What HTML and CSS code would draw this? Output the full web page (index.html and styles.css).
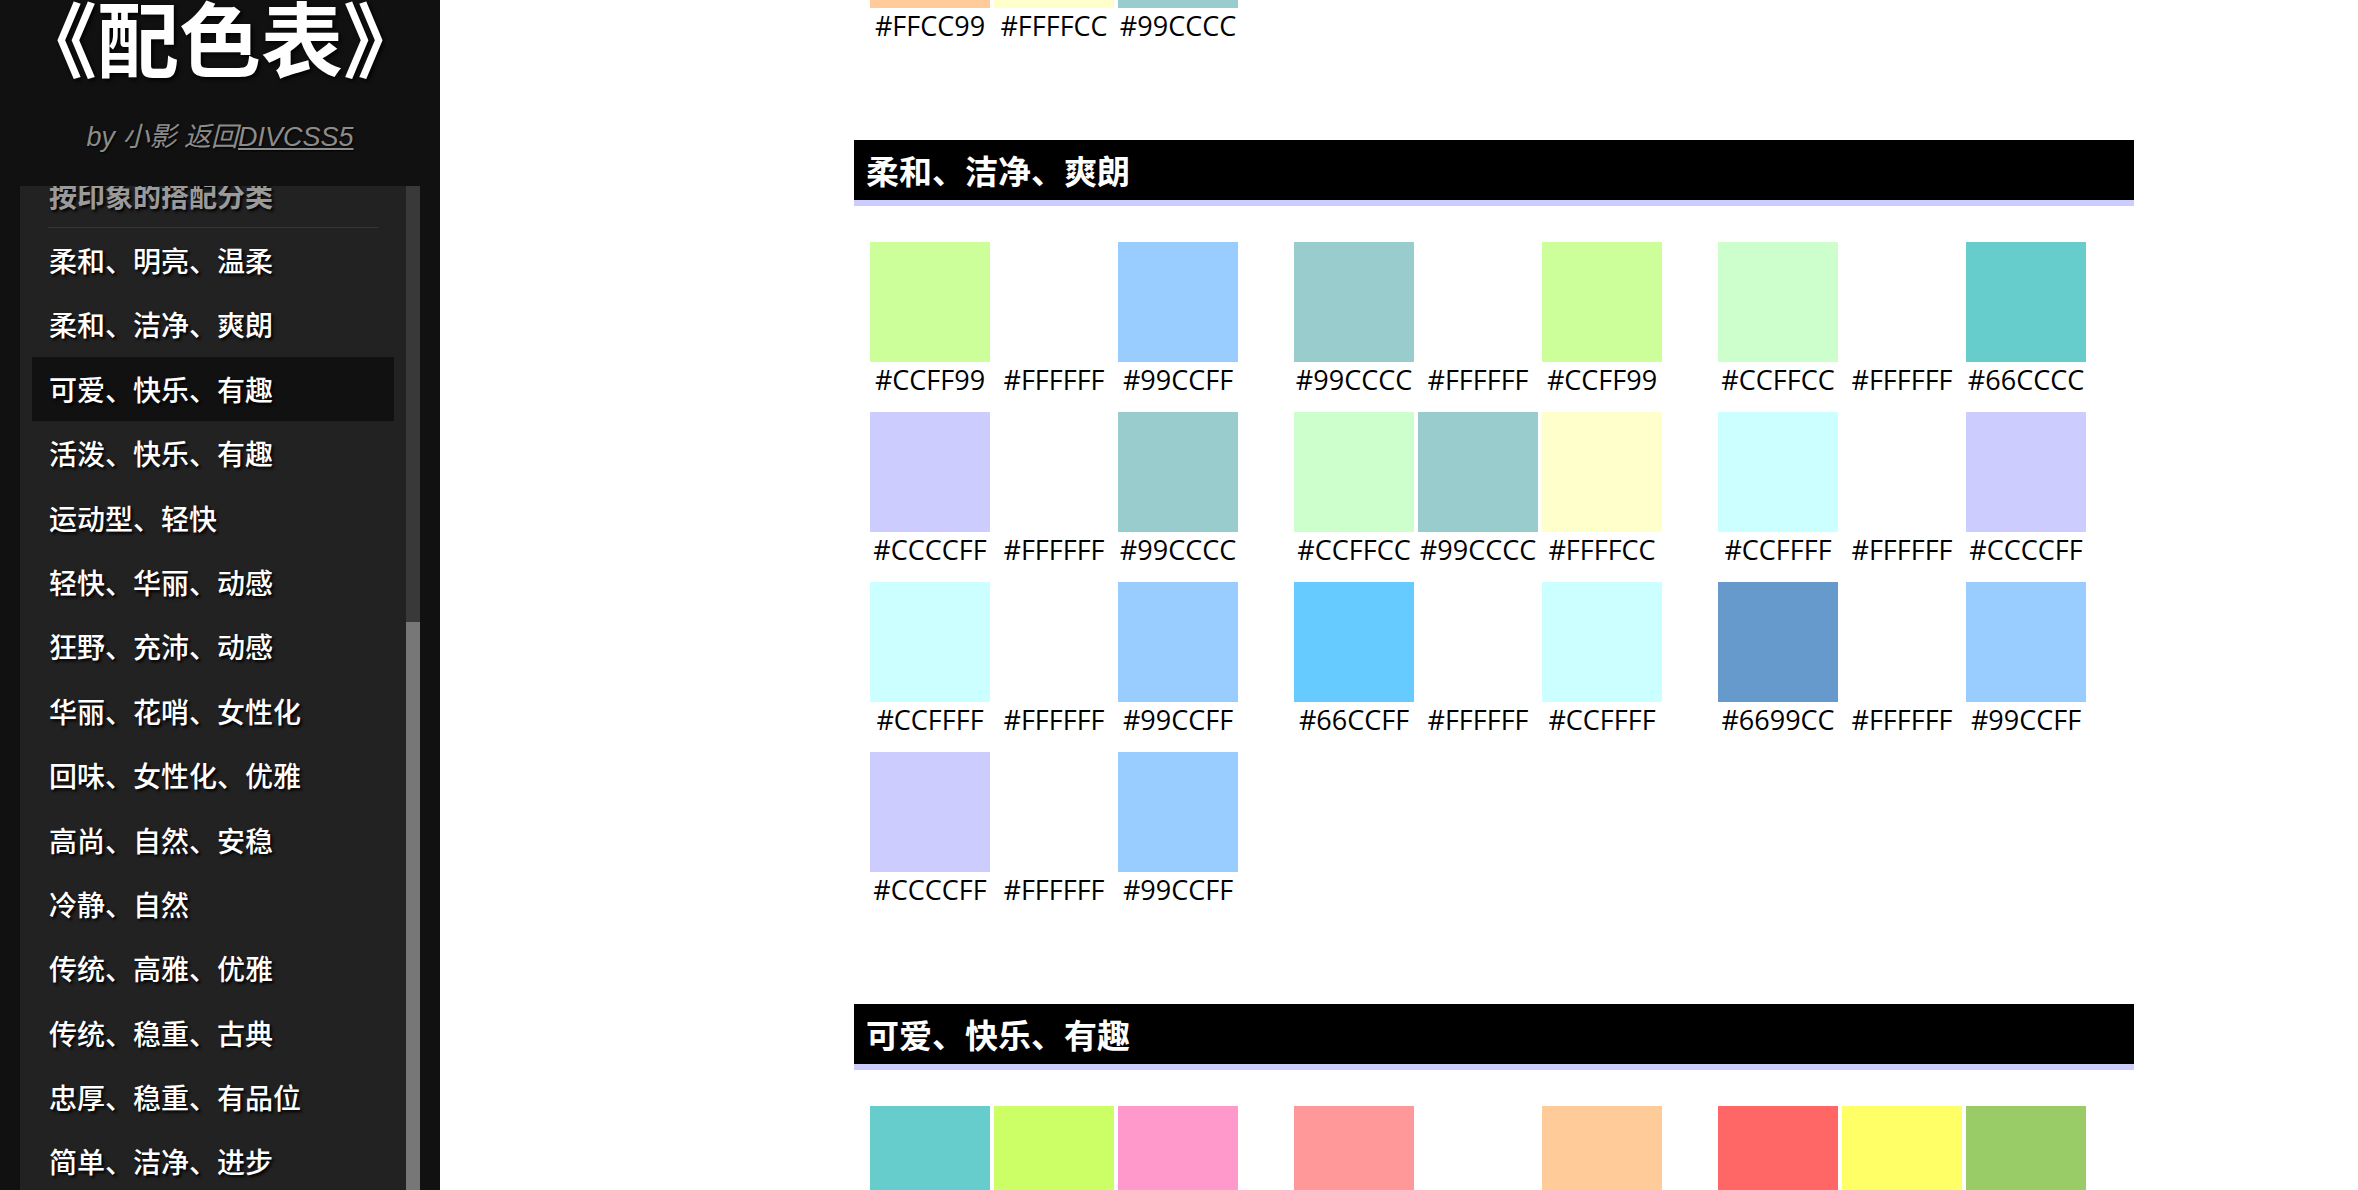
FILE: index.html
```html
<!DOCTYPE html>
<html lang="zh-CN">
<head>
<meta charset="utf-8">
<title>《配色表》</title>
<link rel="stylesheet" href="styles.css">
</head>
<body>
<aside class="sidebar">
  <h1 class="logo">《配色表》</h1>
  <p class="byline">by 小影 返回<a class="byline-link" href="#">DIVCSS5</a></p>
  <div class="panel">
    <nav class="nav">
      <div class="nav-head">按印象的搭配分类</div>
      <ul class="nav-list">
        <li class="nav-item">柔和、明亮、温柔</li>
        <li class="nav-item">柔和、洁净、爽朗</li>
        <li class="nav-item active">可爱、快乐、有趣</li>
        <li class="nav-item">活泼、快乐、有趣</li>
        <li class="nav-item">运动型、轻快</li>
        <li class="nav-item">轻快、华丽、动感</li>
        <li class="nav-item">狂野、充沛、动感</li>
        <li class="nav-item">华丽、花哨、女性化</li>
        <li class="nav-item">回味、女性化、优雅</li>
        <li class="nav-item">高尚、自然、安稳</li>
        <li class="nav-item">冷静、自然</li>
        <li class="nav-item">传统、高雅、优雅</li>
        <li class="nav-item">传统、稳重、古典</li>
        <li class="nav-item">忠厚、稳重、有品位</li>
        <li class="nav-item">简单、洁净、进步</li>
      </ul>
    </nav>
    <div class="scrollbar"><div class="thumb"></div></div>
  </div>
</aside>

<main class="main">
  <div class="content">
    <section class="scheme">
      <div class="rows">
        <div class="group">
          <div class="cell"><div class="sw c-ffcc99"></div><div class="lbl">#FFCC99</div></div>
          <div class="cell"><div class="sw c-ffffcc"></div><div class="lbl">#FFFFCC</div></div>
          <div class="cell"><div class="sw c-99cccc"></div><div class="lbl">#99CCCC</div></div>
        </div>
      </div>
    </section>

    <section class="scheme">
      <h2 class="scheme-title">柔和、洁净、爽朗</h2>
      <div class="rows first">
        <div class="group">
          <div class="cell"><div class="sw c-ccff99"></div><div class="lbl">#CCFF99</div></div>
          <div class="cell"><div class="sw c-ffffff"></div><div class="lbl">#FFFFFF</div></div>
          <div class="cell"><div class="sw c-99ccff"></div><div class="lbl">#99CCFF</div></div>
        </div>
        <div class="group">
          <div class="cell"><div class="sw c-99cccc"></div><div class="lbl">#99CCCC</div></div>
          <div class="cell"><div class="sw c-ffffff"></div><div class="lbl">#FFFFFF</div></div>
          <div class="cell"><div class="sw c-ccff99"></div><div class="lbl">#CCFF99</div></div>
        </div>
        <div class="group">
          <div class="cell"><div class="sw c-ccffcc"></div><div class="lbl">#CCFFCC</div></div>
          <div class="cell"><div class="sw c-ffffff"></div><div class="lbl">#FFFFFF</div></div>
          <div class="cell"><div class="sw c-66cccc"></div><div class="lbl">#66CCCC</div></div>
        </div>

        <div class="group">
          <div class="cell"><div class="sw c-ccccff"></div><div class="lbl">#CCCCFF</div></div>
          <div class="cell"><div class="sw c-ffffff"></div><div class="lbl">#FFFFFF</div></div>
          <div class="cell"><div class="sw c-99cccc"></div><div class="lbl">#99CCCC</div></div>
        </div>
        <div class="group">
          <div class="cell"><div class="sw c-ccffcc"></div><div class="lbl">#CCFFCC</div></div>
          <div class="cell"><div class="sw c-99cccc"></div><div class="lbl">#99CCCC</div></div>
          <div class="cell"><div class="sw c-ffffcc"></div><div class="lbl">#FFFFCC</div></div>
        </div>
        <div class="group">
          <div class="cell"><div class="sw c-ccffff"></div><div class="lbl">#CCFFFF</div></div>
          <div class="cell"><div class="sw c-ffffff"></div><div class="lbl">#FFFFFF</div></div>
          <div class="cell"><div class="sw c-ccccff"></div><div class="lbl">#CCCCFF</div></div>
        </div>

        <div class="group">
          <div class="cell"><div class="sw c-ccffff"></div><div class="lbl">#CCFFFF</div></div>
          <div class="cell"><div class="sw c-ffffff"></div><div class="lbl">#FFFFFF</div></div>
          <div class="cell"><div class="sw c-99ccff"></div><div class="lbl">#99CCFF</div></div>
        </div>
        <div class="group">
          <div class="cell"><div class="sw c-66ccff"></div><div class="lbl">#66CCFF</div></div>
          <div class="cell"><div class="sw c-ffffff"></div><div class="lbl">#FFFFFF</div></div>
          <div class="cell"><div class="sw c-ccffff"></div><div class="lbl">#CCFFFF</div></div>
        </div>
        <div class="group">
          <div class="cell"><div class="sw c-6699cc"></div><div class="lbl">#6699CC</div></div>
          <div class="cell"><div class="sw c-ffffff"></div><div class="lbl">#FFFFFF</div></div>
          <div class="cell"><div class="sw c-99ccff"></div><div class="lbl">#99CCFF</div></div>
        </div>

        <div class="group">
          <div class="cell"><div class="sw c-ccccff"></div><div class="lbl">#CCCCFF</div></div>
          <div class="cell"><div class="sw c-ffffff"></div><div class="lbl">#FFFFFF</div></div>
          <div class="cell"><div class="sw c-99ccff"></div><div class="lbl">#99CCFF</div></div>
        </div>
      </div>
    </section>

    <section class="scheme">
      <h2 class="scheme-title">可爱、快乐、有趣</h2>
      <div class="rows first">
        <div class="group">
          <div class="cell"><div class="sw c-66cccc"></div><div class="lbl">#66CCCC</div></div>
          <div class="cell"><div class="sw c-ccff66"></div><div class="lbl">#CCFF66</div></div>
          <div class="cell"><div class="sw c-ff99cc"></div><div class="lbl">#FF99CC</div></div>
        </div>
        <div class="group">
          <div class="cell"><div class="sw c-ff9999"></div><div class="lbl">#FF9999</div></div>
          <div class="cell"><div class="sw c-ffffff"></div><div class="lbl">#FFFFFF</div></div>
          <div class="cell"><div class="sw c-ffcc99"></div><div class="lbl">#FFCC99</div></div>
        </div>
        <div class="group">
          <div class="cell"><div class="sw c-ff6666"></div><div class="lbl">#FF6666</div></div>
          <div class="cell"><div class="sw c-ffff66"></div><div class="lbl">#FFFF66</div></div>
          <div class="cell"><div class="sw c-99cc66"></div><div class="lbl">#99CC66</div></div>
        </div>
      </div>
    </section>
  </div>
</main>
</body>
</html>
```

FILE: styles.css
```css
html, body {
  margin: 0;
  padding: 0;
  height: 100%;
  overflow: hidden;
}

body {
  display: flex;
  background: #ffffff;
  font-family: "Noto Sans CJK SC", "Noto Sans", sans-serif;
}

/* ---------- sidebar ---------- */
.sidebar {
  flex: 0 0 440px;
  width: 440px;
  height: 100vh;
  background: #111111;
  display: flex;
  flex-direction: column;
  overflow: hidden;
}

.logo {
  margin: -5px 0 0;
  height: 122px;
  font-family: "Noto Sans CJK SC", sans-serif;
  font-size: 82px;
  line-height: 82px;
  font-weight: 700;
  color: #ffffff;
  text-align: center;
  white-space: nowrap;
  text-shadow: 2px 2px 4px #000;
}

.byline {
  margin: 0;
  height: 40px;
  line-height: 40px;
  font-family: "Liberation Sans", "Noto Sans CJK SC", sans-serif;
  font-style: italic;
  font-size: 27px;
  color: #8c8c8c;
  text-align: center;
  text-shadow: 1px 1px 2px #000;
}

.byline-link {
  color: #8c8c8c;
  text-decoration: underline;
}

.panel {
  flex: 1;
  margin: 29px 20px 0;
  background: #222222;
  display: flex;
  overflow: hidden;
}

.nav {
  flex: 1;
  margin-top: -23px;
}

.nav-head {
  height: 64px;
  line-height: 64px;
  margin: 0 28px;
  padding-left: 1px;
  border-bottom: 1px solid #363636;
  font-size: 28px;
  font-weight: 700;
  color: #9a9a9a;
  text-shadow: 2px 2px 3px #000;
}

.nav-list {
  list-style: none;
  margin: 0;
  padding: 0;
}

.nav-item {
  margin: 0 12px;
  height: 64.4px;
  line-height: 64.4px;
  padding-left: 17px;
  font-size: 28px;
  font-weight: 500;
  color: #ffffff;
  text-shadow: 2px 2px 3px #000;
  white-space: nowrap;
}

.nav-item.active {
  background: #111111;
}

.scrollbar {
  flex: 0 0 14px;
  background: #393939;
}

.thumb {
  margin-top: 436px;
  height: 800px;
  background: #777777;
}

/* ---------- main ---------- */
.main {
  flex: 1;
  height: 100vh;
  overflow: hidden;
}

.content {
  width: 1280px;
  margin-left: 414px;
  margin-top: -112px;
}

.scheme {
  margin-bottom: 82px;
}

.scheme-title {
  margin: 0;
  height: 60px;
  line-height: 60px;
  padding-left: 12px;
  background: #000000;
  border-bottom: 6px solid #ccccff;
  color: #ffffff;
  font-family: "Noto Sans CJK SC", sans-serif;
  font-size: 33px;
  font-weight: 700;
}

.rows {
  display: grid;
  grid-template-columns: repeat(3, 368px);
  column-gap: 56px;
  padding-left: 16px;
}

.rows.first {
  margin-top: 36px;
}

.group {
  display: grid;
  grid-template-columns: repeat(3, 120px);
  column-gap: 4px;
}

.cell {
  height: 170px;
}

.sw {
  height: 120px;
}

.lbl {
  height: 50px;
  line-height: 36px;
  text-align: center;
  white-space: nowrap;
  font-family: "Open Sans", "Liberation Sans", sans-serif;
  font-size: 27px;
  color: #000000;
}

/* swatch colours */
.c-ffcc99 { background: #FFCC99; }
.c-ffffcc { background: #FFFFCC; }
.c-99cccc { background: #99CCCC; }
.c-ccff99 { background: #CCFF99; }
.c-ffffff { background: #FFFFFF; }
.c-99ccff { background: #99CCFF; }
.c-ccffcc { background: #CCFFCC; }
.c-66cccc { background: #66CCCC; }
.c-ccccff { background: #CCCCFF; }
.c-ccffff { background: #CCFFFF; }
.c-66ccff { background: #66CCFF; }
.c-6699cc { background: #6699CC; }
.c-ccff66 { background: #CCFF66; }
.c-ff99cc { background: #FF99CC; }
.c-ff9999 { background: #FF9999; }
.c-ff6666 { background: #FF6666; }
.c-ffff66 { background: #FFFF66; }
.c-99cc66 { background: #99CC66; }
```
